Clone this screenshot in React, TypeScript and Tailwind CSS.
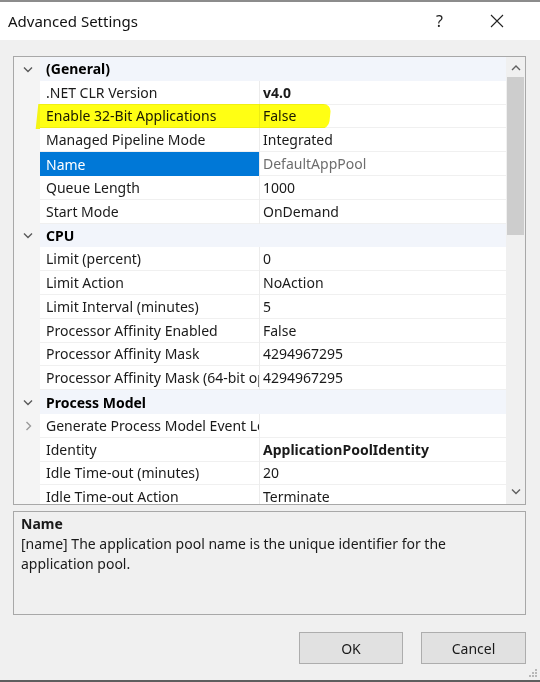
import React from 'react'

type Row =
    | { kind: 'cat'; label: string }
    | { kind: 'prop'; label: string; value: string; bold?: boolean; selected?: boolean; highlight?: boolean; expandable?: boolean }

const rows: Row[] = [
    { kind: 'cat', label: '(General)' },
    { kind: 'prop', label: '.NET CLR Version', value: 'v4.0', bold: true },
    { kind: 'prop', label: 'Enable 32-Bit Applications', value: 'False', highlight: true },
    { kind: 'prop', label: 'Managed Pipeline Mode', value: 'Integrated' },
    { kind: 'prop', label: 'Name', value: 'DefaultAppPool', selected: true },
    { kind: 'prop', label: 'Queue Length', value: '1000' },
    { kind: 'prop', label: 'Start Mode', value: 'OnDemand' },
    { kind: 'cat', label: 'CPU' },
    { kind: 'prop', label: 'Limit (percent)', value: '0' },
    { kind: 'prop', label: 'Limit Action', value: 'NoAction' },
    { kind: 'prop', label: 'Limit Interval (minutes)', value: '5' },
    { kind: 'prop', label: 'Processor Affinity Enabled', value: 'False' },
    { kind: 'prop', label: 'Processor Affinity Mask', value: '4294967295' },
    { kind: 'prop', label: 'Processor Affinity Mask (64-bit option)', value: '4294967295' },
    { kind: 'cat', label: 'Process Model' },
    { kind: 'prop', label: 'Generate Process Model Event Log Entry', value: '', expandable: true },
    { kind: 'prop', label: 'Identity', value: 'ApplicationPoolIdentity', bold: true },
    { kind: 'prop', label: 'Idle Time-out (minutes)', value: '20' },
    { kind: 'prop', label: 'Idle Time-out Action', value: 'Terminate' },
]

function Chevron({ dir, color }: { dir: 'down' | 'right' | 'up'; color: string }) {
    const d =
        dir === 'down' ? 'M1 3.5 L5 7.5 L9 3.5' : dir === 'up' ? 'M1 7 L5 3 L9 7' : 'M3.5 1 L7.5 5 L3.5 9'
    return (
        <svg width="10" height="10" viewBox="0 0 10 10" fill="none">
            <path d={d} stroke={color} strokeWidth="1.4" />
        </svg>
    )
}

function GridRow({ row }: { row: Row }) {
    if (row.kind === 'cat') {
        return (
            <div className="flex h-[23.8px] shrink-0 items-center">
                <div className="flex w-[26px] shrink-0 justify-center pl-[1px]">
                    <Chevron dir="down" color="#5a5a5a" />
                </div>
                <div className="flex h-full flex-1 items-center bg-[#f2f5fb] pl-[6px] font-bold text-black">
                    {row.label}
                </div>
            </div>
        )
    }
    return (
        <div className="relative flex h-[23.8px] shrink-0 items-stretch">
            <div className="flex w-[26px] shrink-0 items-center justify-center pl-[1px]">
                {row.expandable && <Chevron dir="right" color="#9a9a9a" />}
            </div>
            <div
                className={
                    row.selected
                        ? 'flex w-[219px] shrink-0 items-center overflow-hidden whitespace-nowrap bg-[#0078d7] pl-[6px] text-white'
                        : 'flex w-[219px] shrink-0 items-center overflow-hidden whitespace-nowrap border-b border-[#f0f0f0] bg-white pl-[6px] text-[#1a1a1a]'
                }
            >
                {row.label}
            </div>
            <div className="w-px shrink-0 bg-[#ececec]" />
            <div
                className={
                    'flex flex-1 items-center overflow-hidden whitespace-nowrap border-b border-[#f0f0f0] bg-white pl-[3px] ' +
                    (row.selected ? 'text-[#6d6d6d]' : 'text-[#1a1a1a]') +
                    (row.bold ? ' font-bold' : '')
                }
            >
                {row.value}
            </div>
            {row.highlight && (
                <div className="pointer-events-none absolute left-[23px] top-[-1px] h-[25px] w-[293px] -skew-x-6 rounded-r-[8px] bg-[#ffff14] mix-blend-multiply" />
            )}
        </div>
    )
}

export default function App() {
    return (
        <div
            className="relative flex h-[682px] w-[540px] flex-col overflow-hidden border-t-2 border-b-2 border-t-[#8c8c8c] border-b-[#5e5e5e] bg-[#f0f0f0] text-[14px]"
            style={{ fontFamily: '"Noto Sans", "Open Sans", Arial, sans-serif' }}
        >
            {/* title bar */}
            <div className="flex h-[38px] shrink-0 items-center bg-white pl-[8px]">
                <div className="flex-1 text-[15px] text-[#111]">Advanced Settings</div>
                <div className="w-[20px] text-[16px] text-[#222]">?</div>
                <div className="ml-[34px] mr-[36px] flex items-center">
                    <svg width="14" height="14" viewBox="0 0 14 14">
                        <path d="M1 1 L13 13 M13 1 L1 13" stroke="#222" strokeWidth="1.1" />
                    </svg>
                </div>
            </div>

            <div className="flex flex-1 flex-col pl-[13px] pt-[16px]">
                {/* property grid */}
                <div className="flex h-[449px] w-[513px] border border-[#a8a8a8] bg-[#f4f4f4]">
                    <div className="flex flex-1 flex-col overflow-hidden">
                        {rows.map((r, i) => (
                            <GridRow key={i} row={r} />
                        ))}
                    </div>
                    {/* scrollbar */}
                    <div className="flex w-[19px] shrink-0 flex-col items-center bg-[#f0f0f0]">
                        <div className="flex h-[20px] w-full items-center justify-center pt-[2px]">
                            <Chevron dir="up" color="#606060" />
                        </div>
                        <div className="h-[158px] w-[17px] bg-[#cdcdcd]" />
                        <div className="flex-1" />
                        <div className="flex h-[22px] w-full items-center justify-center pb-[4px]">
                            <Chevron dir="down" color="#606060" />
                        </div>
                    </div>
                </div>

                {/* description */}
                <div className="mt-[6px] h-[104px] w-[513px] border border-[#a8a8a8] bg-[#f0f0f0] px-[7px] pt-[2px] text-[#1a1a1a]">
                    <div className="font-bold leading-[20px]">Name</div>
                    <div className="w-[460px] leading-[20px]">
                        [name] The application pool name is the unique identifier for the application pool.
                    </div>
                </div>

                {/* buttons */}
                <div className="mt-[17px] flex w-[513px] justify-end gap-[18px]">
                    <button className="h-[32px] w-[104px] border border-[#adadad] bg-[#e1e1e1] text-[#1a1a1a]">OK</button>
                    <button className="h-[32px] w-[105px] border border-[#adadad] bg-[#e1e1e1] text-[#1a1a1a]">Cancel</button>
                </div>
            </div>

            {/* resize grip */}
            <svg className="absolute bottom-[2px] right-[2px]" width="10" height="10" viewBox="0 0 10 10">
                <rect x="7" y="1" width="2" height="2" fill="#b8b8b8" />
                <rect x="4" y="4" width="2" height="2" fill="#b8b8b8" />
                <rect x="7" y="4" width="2" height="2" fill="#b8b8b8" />
                <rect x="1" y="7" width="2" height="2" fill="#b8b8b8" />
                <rect x="4" y="7" width="2" height="2" fill="#b8b8b8" />
                <rect x="7" y="7" width="2" height="2" fill="#b8b8b8" />
            </svg>
        </div>
    )
}
